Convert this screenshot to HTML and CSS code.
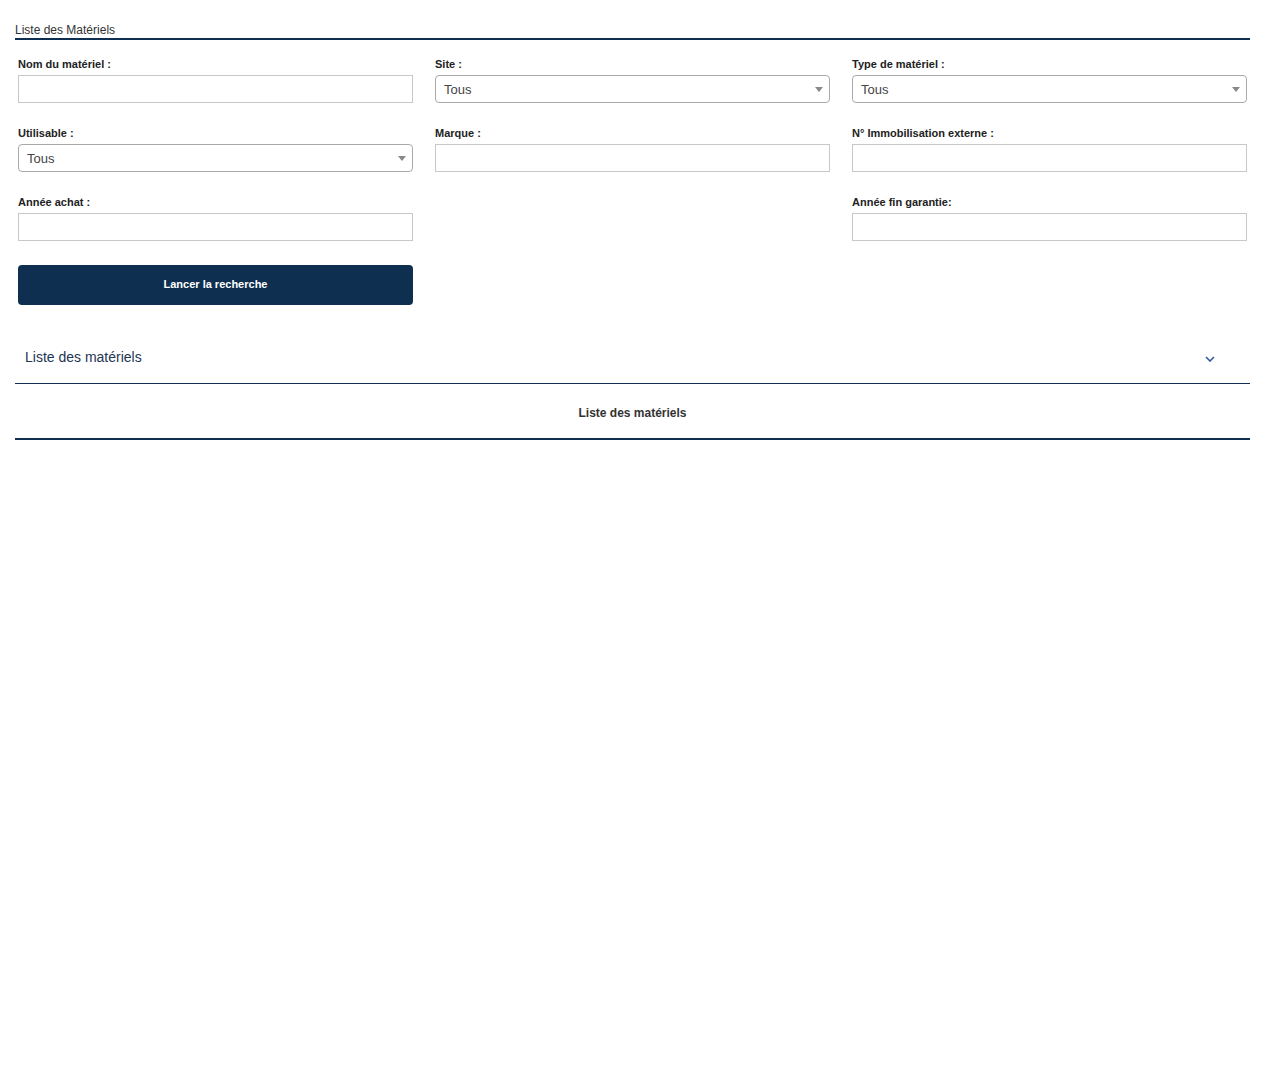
FILE: index.html
```html
<!DOCTYPE html>
<html lang="fr">
<head>
  <meta charset="UTF-8">
  <title>Liste des Matériels</title>
  <link rel="stylesheet" href="styles.css">
</head>
<body>
  <div class="page">
    <div class="page-title">Liste des Matériels</div>

    <div class="filters">
      <div class="field">
        <label>Nom du matériel :</label>
        <input type="text" class="txt">
      </div>
      <div class="field">
        <label>Site :</label>
        <div class="select"><span>Tous</span><b></b></div>
      </div>
      <div class="field">
        <label>Type de matériel :</label>
        <div class="select"><span>Tous</span><b></b></div>
      </div>

      <div class="field">
        <label>Utilisable :</label>
        <div class="select"><span>Tous</span><b></b></div>
      </div>
      <div class="field">
        <label>Marque :</label>
        <input type="text" class="txt">
      </div>
      <div class="field">
        <label>N° Immobilisation externe :</label>
        <input type="text" class="txt">
      </div>

      <div class="field">
        <label>Année achat :</label>
        <input type="text" class="txt">
      </div>
      <div class="field empty"></div>
      <div class="field">
        <label>Année fin garantie:</label>
        <input type="text" class="txt">
      </div>

      <button class="btn-search">Lancer la recherche</button>
    </div>

    <div class="accordion">
      <div class="acc-head">
        <span>Liste des matériels</span>
        <svg width="10" height="6" viewBox="0 0 10 6"><path d="M1 1 L5 5 L9 1" fill="none" stroke="#2b5c9e" stroke-width="1.6"/></svg>
      </div>
      <div class="acc-title">Liste des matériels</div>
    </div>
  </div>
</body>
</html>
```

FILE: styles.css
```css
*{
  margin: 0;
  padding: 0;
  box-sizing: border-box;
}
body{
  font-family: "Liberation Sans", Arial, sans-serif;
  color: #333;
  background: #fff;
}
/* right side keeps room for the browser scrollbar */
.page{
  padding: 0 30px 0 15px;
  min-height: 1100px;
}
.page-title{
  padding: 23px 0 1px;
  font-size: 12px;
  line-height: 14px;
  color: #333;
  border-bottom: 2px solid #0e2f50;
}
.filters{
  display: grid;
  grid-template-columns: repeat(3, 1fr);
  column-gap: 22px;
  row-gap: 24px;
  padding: 18px 3px 0;
}
.field label{
  display: block;
  font-size: 11px;
  line-height: 13px;
  font-weight: bold;
  color: #222;
  margin-bottom: 4px;
}
.field .txt{
  display: block;
  width: 100%;
  height: 28px;
  border: 1px solid #c8c8c8;
  border-radius: 0;
  outline: none;
  font-family: inherit;
}
.field .select{
  display: flex;
  justify-content: space-between;
  align-items: center;
  height: 28px;
  padding: 0 6px 0 8px;
  border: 1px solid #aaa;
  border-radius: 4px;
  font-size: 13px;
  color: #444;
}
.field .select b{
  width: 0;
  height: 0;
  border-left: 4px solid transparent;
  border-right: 4px solid transparent;
  border-top: 5px solid #888;
}
.btn-search{
  grid-column: 1;
  height: 40px;
  padding-bottom: 2px;
  border: 0;
  border-radius: 4px;
  background-color: #0e2f50;
  color: #fff;
  font-family: inherit;
  font-size: 11px;
  font-weight: bold;
}
.accordion{
  margin-top: 30px;
}
.acc-head{
  display: flex;
  justify-content: space-between;
  align-items: center;
  padding: 12px 35px 16px 10px;
  border-bottom: 1px solid #0e2f50;
  font-size: 14px;
  line-height: 20px;
  color: #1d3553;
}
.acc-head svg{
  margin-top: 3px;
}
.acc-title{
  padding: 22px 0 18px;
  text-align: center;
  font-size: 12px;
  line-height: 14px;
  font-weight: bold;
  color: #333;
  border-bottom: 2px solid #0e2f50;
}
```
